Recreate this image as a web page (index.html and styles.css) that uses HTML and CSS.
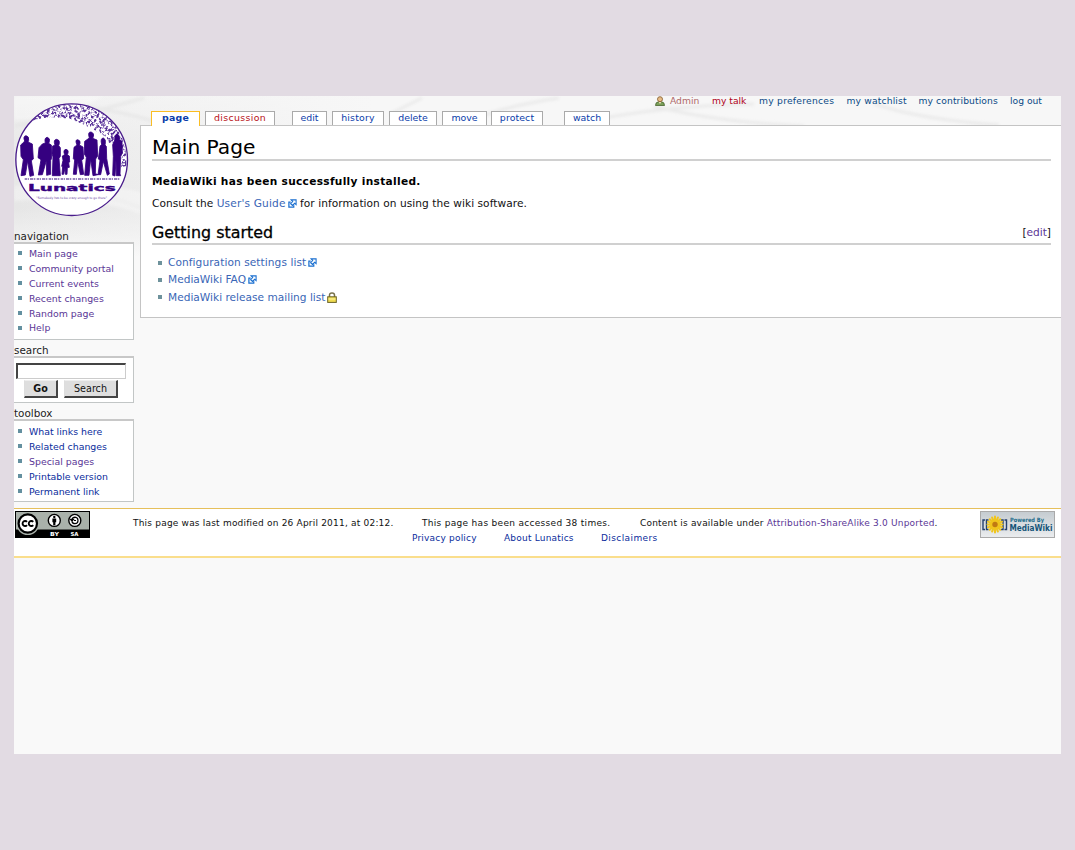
FILE: index.html
```html
<!DOCTYPE html>
<html lang="en">
<head>
<meta charset="utf-8">
<title>Main Page - Lunatics</title>
<link rel="stylesheet" href="styles.css">
</head>
<body>
<svg width="0" height="0" class="defs" aria-hidden="true">
  <symbol id="ext" viewBox="0 0 10 10">
    <path d="M3.5 1h5.5v5.2L7.4 4.8 5 7.2 2.9 5.2 5.2 2.8z" fill="#fff" stroke="#1a6fd0" stroke-width="1.2"/>
    <path d="M3 3.6H1v5.4h5.4V7" fill="none" stroke="#1a6fd0" stroke-width="1.400"/>
  </symbol>
</svg>
<div class="page">
  <svg class="backdrop" viewBox="0 0 1047 160" preserveAspectRatio="none" aria-hidden="true">
    <defs>
      <linearGradient id="fade" x1="0" y1="0" x2="0" y2="1"><stop offset="0" stop-color="#f1f1f1"/><stop offset=".3" stop-color="#e9e9e9"/><stop offset=".7" stop-color="#e6e6e6"/><stop offset=".85" stop-color="#eeeeee"/><stop offset="1" stop-color="#f9f9f9"/></linearGradient>
      <linearGradient id="side" x1="0" y1="0" x2="1" y2="0"><stop offset="0" stop-color="#f7f7f7" stop-opacity="0"/><stop offset="1" stop-color="#f7f7f7"/></linearGradient>
      <filter id="soft"><feGaussianBlur stdDeviation="1.500"/></filter>
    </defs>
    <rect width="1047" height="160" fill="url(#fade)"/>
    <rect width="360" height="160" fill="url(#side)"/>
    <rect x="360" width="687" height="160" fill="#f7f7f7"/>
    <g fill="none" stroke="#e2e2e2" stroke-width="3" opacity=".6" filter="url(#soft)">
      <path d="M0 30Q60 22 130 2M60 10Q100 12 170 34M376 18L408 2M450 28Q480 12 545 2M560 28Q640 10 740 8M640 10Q700 26 790 30M860 8Q910 24 985 29M0 92Q70 88 127 112"/>
    </g>
    <path filter="url(#soft)" d="M0 105Q70 98 127 118V96Q60 80 0 90zM0 0H90Q50 22 0 24z" fill="#fff" opacity=".35"/>
  </svg>

  <aside class="sidebar">
    <svg class="logo" viewBox="18 18 378 378" role="img" aria-label="Lunatics">
      <defs>
        <filter id="speckle" x="0" y="0" width="100%" height="100%" color-interpolation-filters="sRGB">
          <feTurbulence type="fractalNoise" baseFrequency=".12" numOctaves="4" seed="9" result="n"/>
          <feColorMatrix in="n" values="0 0 0 0 .35  0 0 0 0 .2  0 0 0 0 .6  5 0 0 0 -2.2" result="d"/>
          <feComposite in="d" in2="SourceGraphic" operator="in"/>
        </filter>
      </defs>
      <circle cx="191" cy="209" r="167.500" fill="#fff" stroke="#4a1d8c" stroke-width="4"/>
      <path filter="url(#speckle)" d="M72 92Q115 46 186 43Q262 42 308 89Q346 126 354 190L355 228L338 232Q346 200 336 170Q300 172 296 142Q250 112 195 90Q130 72 72 92z" fill="#3a0d82"/>
      <g fill="#350080" stroke="#350080" stroke-width="2.500" stroke-linejoin="round">
        <path d="M54 137q10 2 8 14l-2 5 13 6 3 45-6 5 7 44-11 3-7-46-7 42-13 2 7-48-7-10-1-34 9-8 3-4q-6-14 4-16z"/>
        <path d="M118 142q9 3 6 13l-2 5 8 5 1 40-3 6v42l-12 3-1-44-12 42-12 1 8-46-9-6 3-30 10-11 9-3q-4-16 6-17z"/>
        <path d="M146 148q10 2 8 12l-2 7 5 6v26l-4 6 4 52h-24l2-56-3-10 1-22 8-4q-6-16 5-17z"/>
        <path d="M174 178q9 2 6 11l-2 5 6 4 1 18-3 2 2 14-6 1-1 20h-5l-1-19-4 19h-5l2-22-3-2 4-18-2-13 7-4q-6-14 4-16z"/>
        <path d="M209 149q9 2 7 11l-2 5 11 6 2 35-6 4 6 43-10 1-8-40-4 39-9 0 4-43-4-4 2-34 9-7q-7-16 2-16z"/>
        <path d="M249 126q10 3 7 14l-2 5 13 5 2 48-6 9-1 44 8 3-15 3-7-50-5 49-13 0 5-54-6-10 1-38 14-10q-6-19 5-18z"/>
        <path d="M286 144q8 3 6 15l-1 6 4 4 1 36 8 47-6 4-12-42-8 40-8 0 6-43-5-4 5-38 5-6q-5-18 5-19z"/>
        <path d="M327 133q10 3 7 15l8 6 1 35-5 10-2 53 2 5-13 0-1-47-3 48-7-2 2-57-2-35 7-16q-3-14 6-15z"/>
      </g>
      <path d="M50 267H335" stroke="#7a5caa" stroke-width="4" stroke-dasharray="7 2 4 3 9 2 5 4"/>
      <text x="60" y="304" textLength="263" lengthAdjust="spacingAndGlyphs" class="logo-name">Lunatics</text>
      <text x="85" y="327" textLength="212" lengthAdjust="spacingAndGlyphs" class="logo-motto">"Somebody has to be crazy enough to go there"</text>
    </svg>

    <section class="portlet nav">
      <h5>navigation</h5>
      <ul class="box visited">
        <li><a>Main page</a></li><li><a>Community portal</a></li><li><a>Current events</a></li>
        <li><a>Recent changes</a></li><li><a>Random page</a></li><li><a>Help</a></li>
      </ul>
    </section>
    <section class="portlet search">
      <h5>search</h5>
      <div class="box">
        <div class="field"></div>
        <div class="buttons"><span class="btn go">Go</span><span class="btn find">Search</span></div>
      </div>
    </section>
    <section class="portlet tools">
      <h5>toolbox</h5>
      <ul class="box">
        <li><a>What links here</a></li><li><a>Related changes</a></li><li class="seen"><a>Special pages</a></li>
        <li><a>Printable version</a></li><li><a>Permanent link</a></li>
      </ul>
    </section>
  </aside>

  <div class="column">
    <nav class="personal">
      <svg class="user" viewBox="0 0 10 10"><path d="M.5 9.500Q.5 6 3.500 5.800H6.500Q9.500 6 9.500 9.500z" fill="#7ba05a" stroke="#48652f" stroke-width=".8"/><circle cx="5" cy="3.200" r="2.500" fill="#e8bd85" stroke="#8a6238" stroke-width=".9"/><path d="M3.800 6L5 8 6.200 6z" fill="#f4e2c0"/></svg>
      <a class="admin">Admin</a><a class="talk">my talk</a><a class="prefs">my preferences</a><a class="watchlist">my watchlist</a><a class="contribs">my contributions</a><a>log out</a>
    </nav>
    <nav class="tabs">
      <a class="tab-page">page</a><a class="tab-talk">discussion</a><a class="tab-edit">edit</a><a class="tab-history">history</a><a class="tab-delete">delete</a><a class="tab-move">move</a><a class="tab-protect">protect</a><a class="tab-watch">watch</a>
    </nav>
    <main class="content">
      <h1>Main Page</h1>
      <p class="installed">MediaWiki has been successfully installed.</p>
      <p class="consult">Consult the <a>User's Guide<svg class="ext"><use href="#ext"/></svg></a> for information on using the wiki software.</p>
      <div class="heading"><h2>Getting started</h2><span class="edit">[<a>edit</a>]</span></div>
      <ul class="links">
        <li><a class="config">Configuration settings list<svg class="ext"><use href="#ext"/></svg></a></li>
        <li><a>MediaWiki FAQ<svg class="ext"><use href="#ext"/></svg></a></li>
        <li><a>MediaWiki release mailing list<svg class="lock" viewBox="0 0 10 11"><path d="M2.500 5V3.200Q2.500 1 5 1T7.500 3.200V5" fill="none" stroke="#77704a" stroke-width="1.500"/><rect x=".7" y="4.800" width="8.600" height="5.600" fill="#f0dc50" stroke="#6a6226"/><path d="M1.500 7h7" stroke="#fff6a8"/></svg></a></li>
      </ul>
    </main>
  </div>

  <footer class="footer">
    <svg class="cc" viewBox="0 0 75 27">
      <rect width="75" height="27" fill="#000"/><rect x="1" y="1" width="73" height="17.500" fill="#a9b1aa"/>
      <circle cx="12.800" cy="12.500" r="11.500" fill="#a9b1aa"/><circle cx="12.800" cy="12.500" r="9.200" fill="#fff" stroke="#000" stroke-width="2.200"/>
      <path d="M12 10.900A2.500 2.500 0 1 0 12 14.100M18.200 10.900A2.500 2.500 0 1 0 18.200 14.100" fill="none" stroke="#000" stroke-width="1.900"/>
      <circle cx="39.300" cy="9.400" r="6" fill="#fff" stroke="#000" stroke-width="1.400"/><circle cx="39.300" cy="6" r="1.200"/><path d="M37.400 7.600h3.800v3.600h-.8v3h-2.200v-3h-.8z"/>
      <circle cx="59.800" cy="9.400" r="6" fill="#fff" stroke="#000" stroke-width="1.400"/><path d="M57 8.500Q57.500 6.100 60 6.100Q63 6.400 63 9.400Q63 12.600 60 12.700Q57.500 12.700 57 10.500M55.500 8.300h3l-1.500 1.800zM59 9.500h2" fill="none" stroke="#000" stroke-width="1.200"/>
      <text x="35" y="25" textLength="9" lengthAdjust="spacingAndGlyphs" class="cc-text">BY</text>
      <text x="55.500" y="25" textLength="8" lengthAdjust="spacingAndGlyphs" class="cc-text">SA</text>
    </svg>
    <div class="notes">
      <div class="row"><span class="n1">This page was last modified on 26 April 2011, at 02:12.</span><span class="n2">This page has been accessed 38 times.</span><span class="n3">Content is available under <a>Attribution-ShareAlike 3.0 Unported</a>.</span></div>
      <div class="row second"><a class="f1">Privacy policy</a><a class="f2">About Lunatics</a><a class="f3">Disclaimers</a></div>
    </div>
    <svg class="mw" viewBox="0 0 75 27">
      <defs><linearGradient id="mwbg" x2="0" y2="1"><stop offset="0" stop-color="#c4cbd0"/><stop offset="1" stop-color="#ebedef"/></linearGradient></defs>
      <rect x=".5" y=".5" width="74" height="26" fill="url(#mwbg)" stroke="#aaaaaa"/>
      <path d="M5 9H3v9.500h2M8.500 9H6.500v9.500h2M21 9h2v9.500h-2M24.500 9h2v9.500h-2" fill="none" stroke="#24406e" stroke-width="1.400"/>
      <g stroke="#f0c51c" stroke-width="2" stroke-linecap="round"><path d="M15 5.500v16M7.500 13.500h15M9.700 8.200l10.600 10.600M20.300 8.200l-10.600 10.600M12.100 6.500l5.800 14M17.900 6.500l-5.800 14M8 10.600l14 5.800M22 10.600l-14 5.800"/></g>
      <circle cx="15" cy="13.500" r="2.700" fill="#c07a12"/>
      <text x="30" y="10.500" textLength="34" lengthAdjust="spacingAndGlyphs" class="mw-small">Powered By</text>
      <text x="29.500" y="20" textLength="43" lengthAdjust="spacingAndGlyphs" class="mw-big">MediaWiki</text>
    </svg>
  </footer>
</div>
</body>
</html>
```
FILE: styles.css
```css
* { box-sizing: border-box; }
body { margin: 0; padding: 96px 14px; background: #e2dbe3; font: 10.6px/15px "DejaVu Sans", sans-serif; color: #111; }
h1, h2, h5, p, ul { margin: 0; padding: 0; font-weight: normal; list-style: none; }
a, span, h5 { white-space: nowrap; }
.defs { position: absolute; }
.page { position: relative; isolation: isolate; height: 658px; background: #f9f9f9; display: grid; grid-template-columns: 126px 1fr; grid-template-rows: 412px 50px; }
.backdrop { position: absolute; z-index: -1; left: 0; top: 0; width: 1047px; height: 160px; }

.logo { display: block; width: 126px; height: 126px; margin-bottom: 7px; }
.logo-name { font: bold 25px "DejaVu Sans", sans-serif; fill: #350080; stroke: #350080; stroke-width: 1px; }
.logo-motto { font: 10px "DejaVu Sans", sans-serif; fill: #6a48a4; }
.portlet h5 { font-size: 10.4px; line-height: 14px; height: 13px; color: #222; }
.box { width: 120px; background: #fff; border: solid #c2c6c6; border-width: 2px 1px 1px 0; border-top-color: #c8c8c8; font-size: 9.4px; }
.nav .box { height: 98px; padding-top: 2px; }
.search { margin-top: 3px; }
.search .box { height: 47px; padding: 5px 0 0 2px; }
.tools { margin-top: 3px; }
.tools .box { height: 83px; padding-top: 3px; }
.box li { display: flex; align-items: center; height: 14.900px; gap: 7px; padding-left: 4px; color: #0a2c9c; }
.box li::before { content: ""; width: 4px; height: 4px; background: #6490a0; }
.visited li, .box .seen { color: #5a3696; }
.field { width: 110px; height: 16px; border: 1px solid #ccc; border-top: 2px solid #444; border-left: 2px solid #444; background: #fff; }
.buttons { display: flex; gap: 6px; padding: 1px 0 0 8px; }
.btn { height: 18px; background: #dedede; border: solid #444; border-width: 1px 2px 2px 1px; border-top-color: #eee; border-left-color: #ddd; text-align: center; line-height: 16px; font-size: 9.600px; }
.go { width: 34px; font-weight: bold; }
.find { width: 54px; }

.personal { height: 15px; display: flex; padding-left: 515px; font-size: 9.200px; line-height: 10px; color: #0b4a86; }
.personal .user { width: 10px; height: 10px; margin-right: 5px; }
.personal .admin { width: 42px; color: #b06868; }
.personal .talk { width: 47px; color: #b00018; }
.personal .prefs { width: 87.500px; letter-spacing: .25px; }
.personal .watchlist { width: 72px; letter-spacing: .15px; }
.personal .contribs { width: 91.500px; letter-spacing: .1px; }

.tabs { height: 14px; display: flex; padding-left: 11px; font-size: 9.400px; line-height: 12px; }
.tabs a { height: 14px; background: #fff; border: 1px solid #aaa; border-bottom: 0; text-align: center; color: #0a3caa; margin-right: 5px; }
.tabs .tab-page { position: relative; width: 49px; height: 15px; border-color: #fabd23; font-weight: bold; letter-spacing: .2px; }
.tabs .tab-talk { width: 70px; color: #b81018; margin-right: 17px; letter-spacing: .35px; }
.tabs .tab-edit { width: 35px; }
.tabs .tab-history { width: 52px; letter-spacing: .2px; }
.tabs .tab-delete { width: 48px; }
.tabs .tab-move { width: 45px; margin-right: 4px; }
.tabs .tab-protect { width: 52px; margin-right: 21px; letter-spacing: .1px; }
.tabs .tab-watch { width: 46px; }

.content { height: 193px; background: #fff; border: solid #c4c4c4; border-width: 1px 0 1px 1px; padding: 10px 10px 0 11px; }
h1 { height: 25px; border-bottom: 2px solid #d0d0d0; font-size: 20.200px; line-height: 23px; color: #000; }
.installed { font-weight: bold; margin-top: 13px; color: #000; letter-spacing: .31px; }
.consult { margin-top: 7px; letter-spacing: .05px; }
.content p a, .links a { color: #3a66b6; }
.content p a { letter-spacing: .16px; }
.links .config { letter-spacing: .07px; }
.ext { width: 9px; height: 9px; margin-left: 2px; vertical-align: -1px; }
.lock { width: 10px; height: 11px; margin-left: 2px; vertical-align: -2px; }
.heading { margin-top: 12px; height: 22px; border-bottom: 2px solid #d0d0d0; display: flex; justify-content: space-between; }
h2 { font-size: 15.900px; line-height: 19px; -webkit-text-stroke: .3px #000; color: #000; }
.edit { line-height: 19px; }
.edit a { color: #5a3696; }
.links { padding-top: 9px; }
.links li { display: flex; align-items: center; height: 17.300px; padding-left: 6px; gap: 6px; }
.links li::before { content: ""; width: 4px; height: 4px; background: #6e929c; }

.footer { grid-column: 1 / 3; background: #fff; border-top: 1px solid #e6c05c; border-bottom: 2px solid #fade8c; display: flex; font-size: 9px; color: #111; letter-spacing: .2px; }
.cc { width: 75px; height: 27px; margin: 2px 0 0 1px; letter-spacing: 0; }
.mw { width: 75px; height: 27px; margin: 2px 0 0; letter-spacing: 0; overflow: visible; }
.notes { width: 890px; padding: 7px 0 0 43px; }
.row { display: flex; height: 14.500px; line-height: 15px; }
.n1 { width: 289px; }
.n2 { width: 218px; letter-spacing: .3px; }
.n3 a { color: #5a3696; }
.second { padding-left: 279px; color: #0a2c9c; }
.f1 { width: 92px; }
.f2 { width: 97px; }
.f3 { letter-spacing: .4px; }
.cc-text { font: bold 5.500px "DejaVu Sans", sans-serif; fill: #fff; }
.mw-small { font: bold 6px "DejaVu Sans", sans-serif; fill: #1d6c8c; }
.mw-big { font: bold 8.500px "DejaVu Sans", sans-serif; fill: #145478; }
```
